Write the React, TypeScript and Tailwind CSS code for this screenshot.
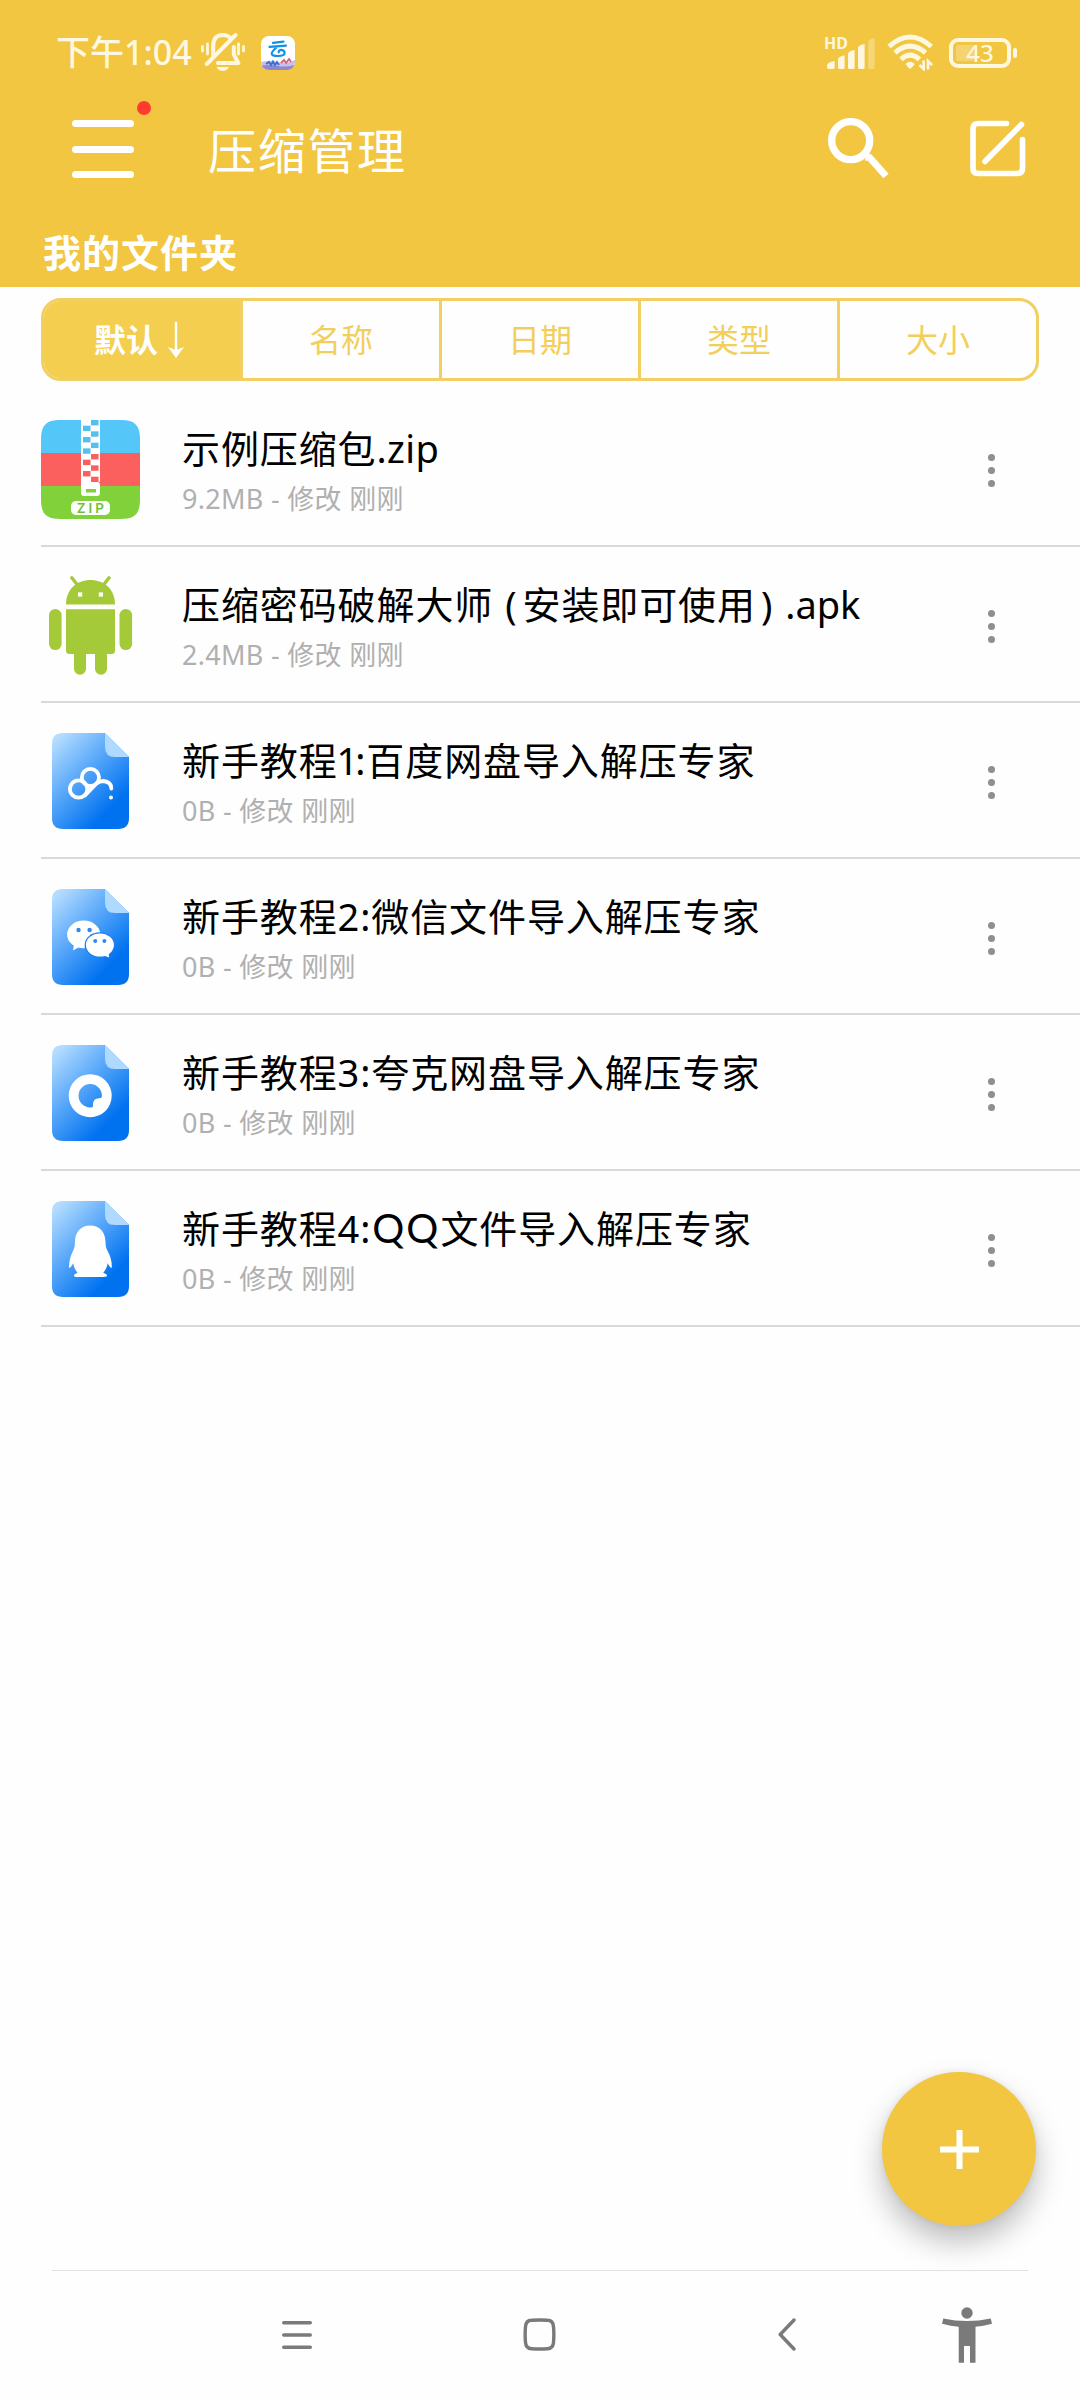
import React, { useState } from 'react';

type IconKind = 'zip' | 'apk' | 'baidu' | 'wechat' | 'quark' | 'qq';

interface FileItem {
  id: string;
  name: React.ReactNode;
  size: string;
  icon: IconKind;
}

const files: FileItem[] = [
  { id: 'zip', name: <>示例压缩包<span className="tracking-[0.4px]">.zip</span></>, size: '9.2MB', icon: 'zip' },
  {
    id: 'apk',
    name: (
      <>
        压缩密码破解大师<span className="pr-[5px] pl-3">(</span>安装即可使用
        <span className="pr-3 pl-[5px]">)</span>
        <span className="tracking-normal">.apk</span>
      </>
    ),
    size: '2.4MB',
    icon: 'apk',
  },
  {
    id: 'baidu',
    name: <>新手教程<span className="-mr-[4px] -ml-px">1</span>:百度网盘导入解压专家</>,
    size: '0B',
    icon: 'baidu',
  },
  { id: 'wechat', name: '新手教程2:微信文件导入解压专家', size: '0B', icon: 'wechat' },
  { id: 'quark', name: '新手教程3:夸克网盘导入解压专家', size: '0B', icon: 'quark' },
  {
    id: 'qq',
    name: (
      <>
        新手教程4:<span className="pl-px font-['Lato',sans-serif] text-[40px] leading-none tracking-[2px]">QQ</span>
        文件导入解压专家
      </>
    ),
    size: '0B',
    icon: 'qq',
  },
];

const tabs = ['默认', '名称', '日期', '类型', '大小'];

function ZipIcon() {
  const rows = [0, 1, 2, 3, 4, 5, 6, 7, 8, 9, 10];
  return (
    <svg width="99" height="99" viewBox="0 0 99 99">
      <defs>
        <clipPath id="zipClip">
          <path d="M0 20C0 5 5 0 20 0H79C94 0 99 5 99 20V79C99 94 94 99 79 99H20C5 99 0 94 0 79Z" />
        </clipPath>
      </defs>
      <g clipPath="url(#zipClip)">
        <rect width="99" height="33" fill="#54c7f8" />
        <rect y="33" width="99" height="33" fill="#fb5f5e" />
        <rect y="66" width="99" height="33" fill="#81d13a" />
        <rect x="40" width="19" height="62" fill="#fff" />
        {rows.map((i) => (
          <rect
            key={i}
            x={i % 2 === 0 ? 50 : 42}
            y={i * 5.67}
            width="7.5"
            height="5.4"
            fill={i < 6 ? '#54c0ee' : '#f85f5e'}
          />
        ))}
        <path d="M40 57H48V62H56Q59 62 59 65V73Q59 76 56 76H43Q40 76 40 73Z" fill="#fff" />
        <rect x="45" y="69" width="10" height="3.5" fill="#81d13a" />
        <rect x="30" y="81" width="39" height="14" rx="5" fill="#fff" />
        <text
          x="50.8"
          y="92.8"
          textAnchor="middle"
          fontSize="13.5"
          fontWeight="600"
          letterSpacing="3"
          fill="#6fc22f"
          fontFamily="Inter, sans-serif"
        >
          ZIP
        </text>
      </g>
    </svg>
  );
}

function AndroidIcon() {
  return (
    <svg width="99" height="99" viewBox="41 576 99 99" fill="#a4ca39">
      <path d="M66 604.6C66 589 77 580 90.5 580S115 589 115 604.6Z" />
      <path d="M71.8 577.8L77.5 585M109 577.8L103.5 585" stroke="#a4ca39" strokeWidth="3.4" strokeLinecap="round" />
      <rect x="78" y="592.4" width="4.2" height="4.2" fill="#fff" />
      <rect x="98.8" y="592.4" width="4.2" height="4.2" fill="#fff" />
      <path d="M66 609.3H115V650.5Q115 654 111.5 654H69.5Q66 654 66 650.5Z" />
      <rect x="49" y="609" width="12.6" height="41" rx="6.3" />
      <rect x="119.5" y="609" width="12.6" height="41" rx="6.3" />
      <path d="M74 650H86V668.8A6 6 0 0 1 74 668.8ZM95 650H107V668.8A6 6 0 0 1 95 668.8Z" />
    </svg>
  );
}

function BaiduGlyph() {
  return (
    <g fill="none" stroke="#fff" strokeWidth="3.8" strokeLinecap="round">
      <circle cx="26.6" cy="56" r="8.7" />
      <circle cx="38.4" cy="44.4" r="8.6" />
      <path d="M33 62.5L44.5 50.5Q47.5 48 51.5 48Q59.3 49 59.3 55.5" />
      <circle cx="59" cy="64.4" r="2" fill="#fff" stroke="none" />
    </g>
  );
}

function WechatGlyph() {
  return (
    <g fill="#fff">
      <ellipse cx="31.7" cy="45.4" rx="16.6" ry="13.8" />
      <path d="M22 55L21 61.5L29 57Z" />
      <ellipse cx="47.6" cy="56" rx="15" ry="12.8" fill="#1d7ff3" />
      <ellipse cx="47.9" cy="56" rx="14" ry="11.6" />
      <path d="M50 66L57.2 68.5L56.3 62Z" />
      <g fill="#2f89f0">
        <circle cx="26.5" cy="41" r="2.2" />
        <circle cx="37.6" cy="41" r="2.2" />
        <circle cx="43.2" cy="52" r="2" />
        <circle cx="52.4" cy="52" r="2" />
      </g>
    </g>
  );
}

function QuarkGlyph() {
  return (
    <path
      fill="#fff"
      fillRule="evenodd"
      d="M38.2 29.2A21.5 21.5 0 1 1 38.2 72.2A21.5 21.5 0 1 1 38.2 29.2ZM38.2 39A11.7 11.7 0 0 0 38.2 62.4C41 62.4 41 62 41 59.5C41 55.5 43 53.6 47 53.2C49.5 53 49.9 52.5 49.9 50.7A11.7 11.7 0 0 0 38.2 39Z"
    />
  );
}

function QQGlyph() {
  return (
    <path
      fill="#fff"
      d="M38.2 24.6C48 24.6 53.5 31.5 53.5 41.5C53.5 46 54.5 48 56.3 51.2C58.5 56 60 60.5 59.8 66.5C59 67.5 57.2 65 55.6 62.2C55.1 66 53.6 69 51.2 71.7C53.5 72.6 55 73.3 55 74.6C55 75.8 53.5 76 51 76H25.5C23 76 21.9 75.6 22 74.6C22.1 73.3 23.5 72.6 25.6 71.7C23.2 69 21.8 66 21.3 62.2C19.5 65 17.8 67.5 17.1 66.5C16.9 60.5 18.2 56 20.4 51.2C22 48 22.9 46 22.9 41.5C22.9 31.5 28.4 24.6 38.2 24.6Z"
    />
  );
}

function DocIcon({ children }: { children: React.ReactNode }) {
  return (
    <svg width="77" height="96" viewBox="0 0 77 96">
      <defs>
        <linearGradient id="docFill" gradientUnits="userSpaceOnUse" x1="5" y1="6" x2="67" y2="67">
          <stop offset="0" stopColor="#b3dcff" />
          <stop offset="0.5" stopColor="#56a6f9" />
          <stop offset="1" stopColor="#0072f0" />
        </linearGradient>
      </defs>
      <path d="M11 0H53L77 24V85Q77 96 66 96H11Q0 96 0 85V11Q0 0 11 0Z" fill="url(#docFill)" />
      <path d="M53 0L77 24H63Q53 24 53 14Z" fill="#afd9ff" />
      {children}
    </svg>
  );
}

function FileIcon({ kind }: { kind: IconKind }) {
  switch (kind) {
    case 'zip':
      return <ZipIcon />;
    case 'apk':
      return <AndroidIcon />;
    case 'baidu':
      return <DocIcon><BaiduGlyph /></DocIcon>;
    case 'wechat':
      return <DocIcon><WechatGlyph /></DocIcon>;
    case 'quark':
      return <DocIcon><QuarkGlyph /></DocIcon>;
    case 'qq':
      return <DocIcon><QQGlyph /></DocIcon>;
  }
}

function MutedBell() {
  return (
    <svg width="44" height="39" viewBox="201 34 44 39" fill="none" stroke="#fff7df" strokeLinecap="round">
      <path d="M213.2 56V47Q213.2 36.2 222.8 36Q227.5 36 230.5 39" strokeWidth="4" />
      <path d="M206.8 65L235.5 36" strokeWidth="4" />
      <path d="M233.8 48V55.5L238.4 64H218" strokeWidth="4" strokeLinejoin="round" />
      <path d="M216.5 68H229Q227 72 222.8 72T216.5 68Z" fill="#fff7df" stroke="none" />
      <path d="M202.5 47.5V52M207.5 45V55M238.5 45V55M243.5 47.5V52" strokeWidth="2.8" />
    </svg>
  );
}

function CloudAppBadge() {
  return (
    <svg width="34" height="34" viewBox="0 0 34 34">
      <defs>
        <clipPath id="appClip">
          <rect width="34" height="34" rx="8" />
        </clipPath>
      </defs>
      <g clipPath="url(#appClip)">
        <rect width="34" height="34" fill="#fff" />
        <path d="M0 26Q8 24 17 26T34 24V34H0Z" fill="#c9bfe8" />
        <path d="M0 29.5Q10 28.5 17 30T34 29V34H0Z" fill="#9088cf" />
        <path d="M5 28L8 26L10 29L12 25.5L14 29L16 26L18 29" stroke="#3a74d8" strokeWidth="2" fill="none" />
        <path d="M20 27L23 24L25 27L28 23L30 26" stroke="#d2627c" strokeWidth="1.8" fill="none" />
        <path
          d="M12 6.8L22.5 5.6M8.5 10.8L25 9.6M16 11Q10.5 15.5 10.8 18Q11.2 20 17 20Q23.8 20 23.6 16.5Q23 13.8 20 13.8Q17.3 14.2 17.8 16.3"
          stroke="#1191e8"
          strokeWidth="2.2"
          strokeLinecap="round"
          fill="none"
        />
      </g>
    </svg>
  );
}

function SignalIcon() {
  return (
    <svg width="54" height="48" viewBox="823 28 54 48" fill="#fff7df">
      <text x="824" y="48" fontSize="16" fontWeight="700" fontFamily="'Noto Sans', sans-serif">
        HD
      </text>
      <path d="M827 64Q829 60.5 834.6 60V66.5Q834.6 68 833 68H829Q827 68 827 66Z" />
      <path d="M838 58Q840 55 844.6 54.6V66.5Q844.6 68 843 68H839.5Q838 68 838 66.5Z" />
      <path d="M848 52Q850 49.4 854.6 49V66.5Q854.6 68 853 68H849.5Q848 68 848 66.5Z" />
      <path d="M858 46Q860 43.4 864.6 43V66.5Q864.6 68 863 68H859.5Q858 68 858 66.5Z" />
      <path d="M868.3 40Q870 37.5 874.6 37V66.5Q874.6 68 873 68H870Q868.3 68 868.3 66.5Z" opacity="0.35" />
    </svg>
  );
}

function WifiIcon() {
  return (
    <svg width="47" height="37" viewBox="887.5 34.5 47 37" fill="none" stroke="#fff7df">
      <path d="M889.5 47Q910.5 28 931.8 47" strokeWidth="5" />
      <path d="M895.5 53.3Q910.5 40 926 53.3" strokeWidth="5" />
      <path d="M901.5 59.8Q910.5 51.5 920 59.8" strokeWidth="5" />
      <path d="M906 64.5Q910.5 60 915.3 64.5Q911 70 910.5 69Q910 70 906 64.5Z" fill="#fff7df" stroke="none" />
      <path d="M924.2 61V69.5L920 65.5M928.5 70V61.5L932.6 65.5" strokeWidth="2.6" />
    </svg>
  );
}

function Battery() {
  return (
    <div className="flex items-center gap-[2px]">
      <div className="flex h-[30px] w-[62px] rounded-[9px] border-[4px] border-[#fff7df] p-[3px]">
        <div className="relative flex-1">
          <div className="h-full w-[18px] rounded-[2px] bg-white/25" />
          <span className="absolute inset-0 flex items-center justify-center text-[24px] leading-none font-medium text-[#fff7df]">
            43
          </span>
        </div>
      </div>
      <div className="h-[10px] w-[4px] rounded-[2px] bg-[#fff7df]" />
    </div>
  );
}

function StatusBar() {
  return (
    <div className="flex h-[105px] items-center pr-[63px] pl-[56px]">
      <span className="-mt-px w-[145px] text-[34px] leading-none font-medium whitespace-nowrap text-[#fff7df]">
        下午1:04
      </span>
      <MutedBell />
      <div className="ml-4">
        <CloudAppBadge />
      </div>
      <div className="ml-auto flex items-center">
        <SignalIcon />
        <div className="ml-[10px]">
          <WifiIcon />
        </div>
        <div className="ml-[15px]">
          <Battery />
        </div>
      </div>
    </div>
  );
}

function Header() {
  return (
    <header className="h-[287px] bg-[#f2c641] text-white">
      <StatusBar />
      <div className="flex h-[88px] items-center pr-[54px] pl-[72px]">
        <button className="relative flex h-[58px] w-[62px] flex-col justify-between" aria-label="菜单">
          <span className="h-[7px] w-full rounded-full bg-white" />
          <span className="h-[7px] w-full rounded-full bg-white" />
          <span className="h-[7px] w-full rounded-full bg-white" />
          <span className="absolute -top-[19px] -right-[17px] h-[14px] w-[14px] rounded-full bg-[#ff3b2f]" />
        </button>
        <h1 className="mt-[3px] ml-[74px] text-[48px] leading-none tracking-[1.7px]">压缩管理</h1>
        <div className="ml-auto flex items-center">
          <svg width="62" height="62" viewBox="828 118 62 62" fill="none" stroke="#fff">
            <circle cx="850.7" cy="140.6" r="19" strokeWidth="7.4" />
            <path d="M865.5 157L869.5 157.5L886 176" strokeWidth="7" />
          </svg>
          <svg
            width="56"
            height="58"
            viewBox="970 120.5 56 58"
            className="ml-20"
            fill="none"
            stroke="#fff"
            strokeWidth="5.6"
            strokeLinecap="round"
          >
            <path d="M1006.5 124H978Q973 124 973 129V169Q973 174 978 174H1017.5Q1022.5 174 1022.5 169V140" />
            <path d="M985 162L1021.5 125" />
          </svg>
        </div>
      </div>
      <h2 className="mt-[40px] ml-[43px] text-[38px] leading-none font-bold tracking-[1px]">我的文件夹</h2>
    </header>
  );
}

function SortTabs() {
  const [active, setActive] = useState(0);

  return (
    <div className="mx-[41px] mt-[11px] flex h-[83px] overflow-hidden rounded-[20px] border-[3px] border-[#f1cf60] divide-x-[3px] divide-[#f1cf60]">
      {tabs.map((tab, index) => (
        <button
          key={tab}
          onClick={() => setActive(index)}
          className={
            index === active
              ? 'flex flex-1 items-center justify-center bg-[#f4ce4e] text-[32px] font-bold text-white'
              : 'flex flex-1 items-center justify-center text-[32px] text-[#f2cf5c]'
          }
        >
          {tab}
          {index === active && (
            <svg width="16" height="36" viewBox="0 0 16 36" className="mr-[6px] ml-[10px]">
              <path d="M8 0V33" stroke="#fff" strokeWidth="2.4" />
              <path d="M0 25L8 28L16 25L8 36Z" fill="#fff" />
            </svg>
          )}
        </button>
      ))}
    </div>
  );
}

function FileRow({ file }: { file: FileItem }) {
  return (
    <li className="ml-[41px] flex h-[156px] items-center border-b-2 border-[#d8d8d8] pt-[2px] pr-[85px]">
      <div className="flex w-[99px] justify-center">
        <FileIcon kind={file.icon} />
      </div>
      <div className="mt-[9px] ml-[42px] min-w-0 flex-1 whitespace-nowrap">
        <p className="h-[50px] text-[38px] leading-[50px] tracking-[0.9px] text-black">{file.name}</p>
        <p className="mt-px text-[27px] leading-[50px] tracking-[0.3px] text-[#b0b0b0]">{file.size} - 修改 刚刚</p>
      </div>
      <button className="mt-[2px] flex flex-col items-center gap-[6px]" aria-label="更多">
        <span className="h-[7px] w-[7px] rounded-full bg-[#8e8e93]" />
        <span className="h-[7px] w-[7px] rounded-full bg-[#8e8e93]" />
        <span className="h-[7px] w-[7px] rounded-full bg-[#8e8e93]" />
      </button>
    </li>
  );
}

function NavBar() {
  return (
    <nav className="mt-[44px] h-[130px] px-[52px]">
      <div className="h-px bg-[#e2e2e2]" />
      <div className="flex h-[127px] items-center pl-[230px] text-[#7a7a7a]">
        <svg width="30" height="30" viewBox="0 0 30 30" stroke="currentColor" strokeWidth="3.4" strokeLinecap="round">
          <path d="M1.7 2.7H28.3M1.7 15H28.3M1.7 27.3H28.3" />
        </svg>
        <svg width="33" height="33" viewBox="0 0 33 33" className="ml-[211px]" fill="none" stroke="currentColor" strokeWidth="3.4">
          <path d="M8.5 2.3Q16.5 1.6 24.5 2.3Q30 2.5 30.5 8.5Q31.2 16.5 30.5 24.5Q30 30.5 24.5 30.7Q16.5 31.4 8.5 30.7Q3 30.5 2.5 24.5Q1.8 16.5 2.5 8.5Q3 2.5 8.5 2.3Z" />
        </svg>
        <svg width="18" height="33" viewBox="0 0 18 33" className="ml-[222px]" fill="none" stroke="currentColor" strokeWidth="3.4" strokeLinecap="round" strokeLinejoin="round">
          <path d="M16 2L2.2 16.5L16 31" />
        </svg>
        <svg width="50" height="56" viewBox="942 2307 50 56" className="ml-[146px]" fill="currentColor">
          <circle cx="967" cy="2313" r="5.7" />
          <path d="M943.3 2318.5Q967 2323.5 990.7 2318.5L992 2323.8Q983 2326.2 975.5 2326.8V2362.7H970V2346H964V2362.7H958.7V2326.8Q951 2326.2 942 2323.8Z" />
        </svg>
      </div>
    </nav>
  );
}

export default function App() {
  return (
    <div className="flex h-[2400px] w-[1080px] flex-col bg-[#fefefe] font-['Noto_Sans','Noto_Sans_CJK_SC',sans-serif]">
      <Header />
      <SortTabs />
      <ul className="mt-[10px]">
        {files.map((file) => (
          <FileRow key={file.id} file={file} />
        ))}
      </ul>
      <button
        className="mt-auto mr-[44px] flex h-[154px] w-[154px] shrink-0 items-center justify-center self-end rounded-full bg-[#f2c641] shadow-[0_16px_30px_rgba(0,0,0,0.26),0_0_6px_rgba(0,0,0,0.08)]"
        aria-label="添加"
      >
        <svg width="39" height="39" viewBox="0 0 39 39">
          <path d="M19.5 0V39M0 19.5H39" stroke="#fff" strokeWidth="6" />
        </svg>
      </button>
      <NavBar />
    </div>
  );
}
